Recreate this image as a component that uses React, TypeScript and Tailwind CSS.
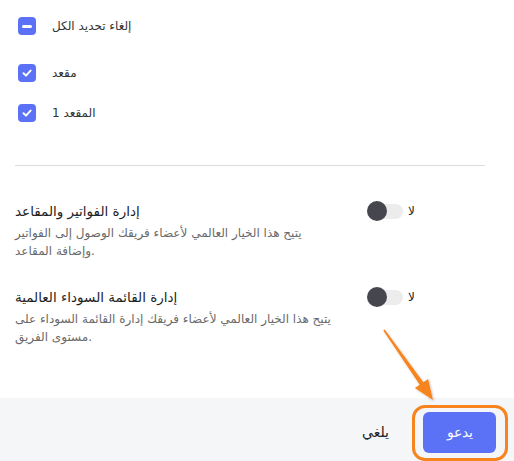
import React from "react";

function CheckIcon() {
  return (
    <svg width="12" height="12" viewBox="0 0 12 12" fill="none">
      <path d="M2.5 6.2 L5 8.6 L9.6 3.6" stroke="white" strokeWidth="2" strokeLinecap="round" strokeLinejoin="round" />
    </svg>
  );
}

function Box({ minus }: { minus?: boolean }) {
  return (
    <span className="w-[18px] h-[18px] rounded-[4px] bg-[#5b72f6] flex items-center justify-center shrink-0">
      {minus ? <span className="w-[10px] h-[3px] rounded-full bg-white" /> : <CheckIcon />}
    </span>
  );
}

function Toggle() {
  return (
    <div className="flex items-center gap-[5px]">
      <div className="relative w-[36px] h-[20px] flex items-center">
        <div className="ml-[3px] w-[33px] h-[15px] rounded-full bg-[#ececec]" />
        <div className="absolute left-0 top-0 w-[20px] h-[20px] rounded-full bg-[#46464f]" />
      </div>
      <span className="text-[12px] text-[#222]">لا</span>
    </div>
  );
}

function Setting({ title, lines }: { title: string; lines: string[] }) {
  return (
    <div className="flex items-start">
      <div className="w-[352px] pr-[10px]">
        <div className="text-[13.5px] leading-[20px] text-[#1f1f1f]">{title}</div>
        <div className="mt-[3px] text-[12px] leading-[18px] text-[#6a6a6a]">
          {lines.map((l, i) => (
            <div key={i}>{l}</div>
          ))}
        </div>
      </div>
      <div className="h-[20px] flex items-center">
        <Toggle />
      </div>
    </div>
  );
}

export default function App() {
  return (
    <div
      className="relative w-[514px] h-[461px] bg-white overflow-hidden flex flex-col"
      style={{ fontFamily: '"DejaVu Sans", "Noto Sans", sans-serif' }}
    >
      <div className="px-[15px]">
        <div className="mt-[17px] pl-[3px] h-[18px] flex items-center gap-[16px]">
          <Box minus />
          <span className="text-[12px] text-[#333]">إلغاء تحديد الكل</span>
        </div>
        <div className="mt-[29px] pl-[3px] h-[18px] flex items-center gap-[16px]">
          <Box />
          <span className="text-[12px] text-[#333]">مقعد</span>
        </div>
        <div className="mt-[22px] pl-[3px] h-[18px] flex items-center gap-[16px]">
          <Box />
          <span className="text-[12px] text-[#333]">المقعد 1</span>
        </div>
        <div className="mt-[43px] mr-[14px] h-[1px] bg-[#dcdcdc]" />
        <div className="mt-[35px]">
          <Setting
            title="إدارة الفواتير والمقاعد"
            lines={["يتيح هذا الخيار العالمي لأعضاء فريقك الوصول إلى الفواتير", "وإضافة المقاعد."]}
          />
        </div>
        <div className="mt-[27px]">
          <Setting
            title="إدارة القائمة السوداء العالمية"
            lines={["يتيح هذا الخيار العالمي لأعضاء فريقك إدارة القائمة السوداء على", "مستوى الفريق."]}
          />
        </div>
      </div>
      <div className="flex-1" />
      <div className="h-[63px] bg-[#f5f6f8] flex items-center justify-end pr-[18px] gap-[34px]">
        <button className="text-[14px] text-[#222] mt-[6px]">يلغي</button>
        <div className="relative">
          <button className="w-[73px] h-[41px] rounded-[6px] bg-[#5b72f6] text-white text-[14px] font-light flex items-center justify-center mt-[6px]">
            يدعو
          </button>
          <span className="absolute left-[-11px] right-[-12px] top-[-1px] bottom-[-8px] border-[3px] border-[#f7841e] rounded-[13px]" />
        </div>
      </div>
      <svg className="absolute left-0 top-0 pointer-events-none" width="514" height="461" viewBox="0 0 514 461">
        <defs>
          <filter id="sh" x="-20%" y="-20%" width="140%" height="140%">
            <feDropShadow dx="1" dy="1" stdDeviation="1" floodColor="#000" floodOpacity="0.25" />
          </filter>
        </defs>
        <polygon
          filter="url(#sh)"
          fill="#f7841e"
          points="384.7,329.5 423.3,382.2 428.1,378.9 433,400 414.9,388.1 419.7,384.8 383.3,330.5"
        />
      </svg>
    </div>
  );
}
